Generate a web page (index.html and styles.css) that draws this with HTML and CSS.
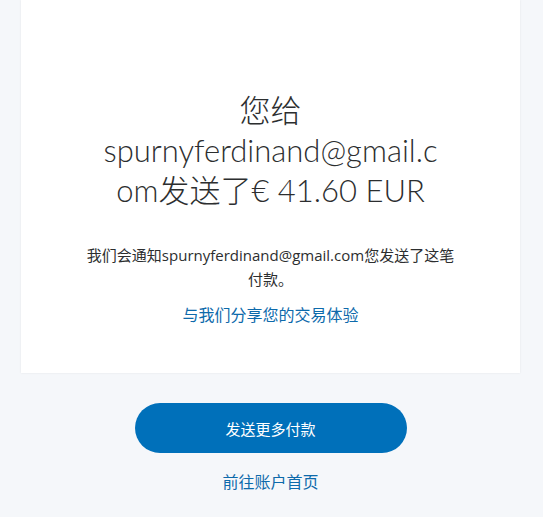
FILE: index.html
```html
<!DOCTYPE html>
<html lang="zh-CN">
<head>
  <meta charset="UTF-8">
  <meta name="viewport" content="width=device-width, initial-scale=1.0">
  <title>付款已发送</title>
  <link rel="stylesheet" href="styles.css">
</head>
<body>
  <div class="page">
    <div class="card">
      <h1 class="title">您给spurnyferdinand@gmail.com发送了€ 41.60 EUR</h1>
      <p class="note">我们会通知spurnyferdinand@gmail.com您发送了这笔付款。</p>
      <a class="link" href="#">与我们分享您的交易体验</a>
    </div>
    <button class="primary">发送更多付款</button>
    <a class="link home" href="#">前往账户首页</a>
  </div>
</body>
</html>
```

FILE: styles.css
```css
body {
  margin: 0;
  background-color: #f5f7fa;
  font-family: "Open Sans", "Noto Sans CJK SC", sans-serif;
  color: #2c2e2f;
}
.page {
  display: flex;
  flex-direction: column;
  align-items: center;
  padding: 0 23px 0 21px;
}
.card {
  align-self: stretch;
  background: #fff;
  padding: 90px 20px 46px;
  display: flex;
  flex-direction: column;
  align-items: center;
  text-align: center;
  box-shadow: 0 0 2px rgba(0, 0, 0, 0.08);
}
.title {
  margin: 0;
  width: 342px;
  font-family: "Lato", "Noto Sans CJK SC", sans-serif;
  font-weight: 300;
  font-size: 31px;
  line-height: 40px;
  overflow-wrap: break-word;
}
.note {
  margin: 33px 0 0;
  max-width: 380px;
  font-size: 15px;
  line-height: 24px;
}
.link {
  margin-top: 12px;
  font-size: 16px;
  line-height: 24px;
  color: #0d6aab;
  text-decoration: none;
}
.primary {
  margin-top: 30px;
  width: 272px;
  height: 50px;
  border: none;
  border-radius: 25px;
  background-color: #0070ba;
  color: #fff;
  font-family: "Open Sans", "Noto Sans CJK SC", sans-serif;
  font-size: 15px;
  font-weight: 400;
  cursor: pointer;
}
.home {
  margin-top: 17px;
}
```
